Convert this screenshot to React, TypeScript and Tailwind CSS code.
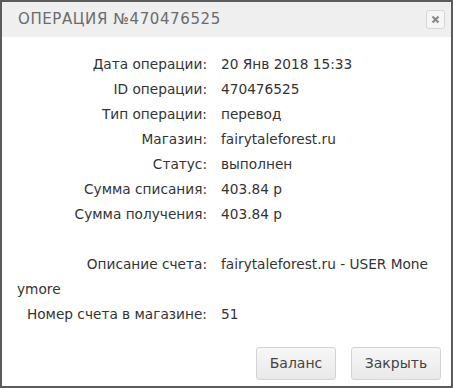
import React from 'react'

const rows: [string, string][] = [
  ['Дата операции:', '20 Янв 2018 15:33'],
  ['ID операции:', '470476525'],
  ['Тип операции:', 'перевод'],
  ['Магазин:', 'fairytaleforest.ru'],
  ['Статус:', 'выполнен'],
  ['Сумма списания:', '403.84 р'],
  ['Сумма получения:', '403.84 р'],
]

function Row({ label, value }: { label: string; value: string }) {
  return (
    <div className="leading-[25px] break-all">
      <span className="inline-block w-[204px] pr-[14px] text-right text-[#333] whitespace-nowrap">{label}</span>
      <span className="text-[#333]">{value}</span>
    </div>
  )
}

export default function App() {
  return (
    <div
      className="w-[453px] h-[388px] border-2 border-[#5b5b5b] bg-white flex flex-col"
      style={{ fontFamily: '"DejaVu Sans", sans-serif' }}
    >
      <div className="h-[35px] bg-[#efefef] flex items-center justify-between pl-4 pr-[6px]">
        <span className="text-[15px] tracking-[0.6px] text-[#6b6b6b] uppercase">Операция №470476525</span>
        <button className="w-[19px] h-[19px] rounded-[3px] border border-[#d6d6d6] bg-[#f6f6f6] flex items-center justify-center">
          <svg width="9" height="9" viewBox="0 0 9 9">
            <path d="M1.5 1.5 L7.5 7.5 M7.5 1.5 L1.5 7.5" stroke="#8a8a8a" strokeWidth="2.2" />
          </svg>
        </button>
      </div>
      <div className="flex-1 px-[15px] pt-[15px] text-[13.7px]">
        {rows.map(([l, v]) => (
          <Row key={l} label={l} value={v} />
        ))}
        <div className="h-[25px]" />
        <Row label="Описание счета:" value="fairytaleforest.ru - USER Moneymore" />
        <Row label="Номер счета в магазине:" value="51" />
      </div>
      <div className="flex justify-end gap-[15px] pr-[10px] pb-[6px]">
        <button className="h-[33px] w-[80px] rounded-[3px] border border-[#d3d3d3] bg-gradient-to-b from-[#f7f7f7] to-[#e9e9e9] text-[14px] text-[#444]">
          Баланс
        </button>
        <button className="h-[33px] w-[90px] rounded-[3px] border border-[#d3d3d3] bg-gradient-to-b from-[#f7f7f7] to-[#e9e9e9] text-[14px] text-[#444]">
          Закрыть
        </button>
      </div>
    </div>
  )
}
